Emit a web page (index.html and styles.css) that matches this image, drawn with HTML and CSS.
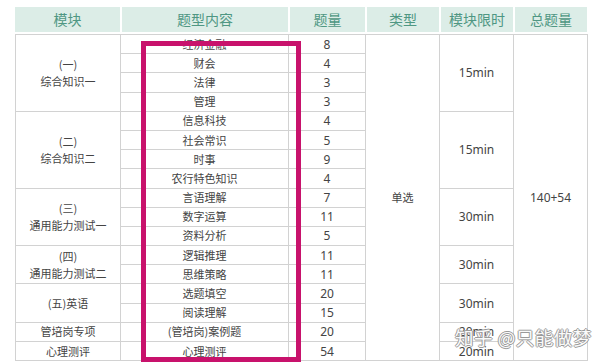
FILE: index.html
```html
<!DOCTYPE html>
<html lang="zh">
<head>
<meta charset="utf-8">
<link rel="stylesheet" href="styles.css">
</head>
<body>
<div class="sheet">
  <div class="head">
    <div class="hc">模块</div>
    <div class="hc">题型内容</div>
    <div class="hc">题量</div>
    <div class="hc">类型</div>
    <div class="hc">模块限时</div>
    <div class="hc">总题量</div>
  </div>
  <table class="grid">
    <colgroup>
      <col class="c1"><col class="c2"><col class="c3"><col class="c4"><col class="c5"><col class="c6">
    </colgroup>
    <tbody>
      <tr><td rowspan="4" class="mod">(一)<br>综合知识一</td><td>经济金融</td><td class="num">8</td><td rowspan="17">单选</td><td rowspan="4" class="num">15min</td><td rowspan="17" class="num">140+54</td></tr>
      <tr><td>财会</td><td class="num">4</td></tr>
      <tr><td>法律</td><td class="num">3</td></tr>
      <tr><td>管理</td><td class="num">3</td></tr>
      <tr><td rowspan="4" class="mod">(二)<br>综合知识二</td><td>信息科技</td><td class="num">4</td><td rowspan="4" class="num">15min</td></tr>
      <tr><td>社会常识</td><td class="num">5</td></tr>
      <tr><td>时事</td><td class="num">9</td></tr>
      <tr><td>农行特色知识</td><td class="num">4</td></tr>
      <tr><td rowspan="3" class="mod">(三)<br>通用能力测试一</td><td>言语理解</td><td class="num">7</td><td rowspan="3" class="num">30min</td></tr>
      <tr><td>数字运算</td><td class="num">11</td></tr>
      <tr><td>资料分析</td><td class="num">5</td></tr>
      <tr><td rowspan="2" class="mod">(四)<br>通用能力测试二</td><td>逻辑推理</td><td class="num">11</td><td rowspan="2" class="num">30min</td></tr>
      <tr><td>思维策略</td><td class="num">11</td></tr>
      <tr><td rowspan="2">(五)英语</td><td>选题填空</td><td class="num">20</td><td rowspan="2" class="num">30min</td></tr>
      <tr><td>阅读理解</td><td class="num">15</td></tr>
      <tr><td>管培岗专项</td><td>(管培岗)案例题</td><td class="num">20</td><td class="num">20min</td></tr>
      <tr><td>心理测评</td><td>心理测评</td><td class="num">54</td><td class="num">20min</td></tr>
    </tbody>
  </table>
  <div class="mark"></div>
  <div class="wm">知乎 @只能做梦</div>
</div>
</body>
</html>
```

FILE: styles.css
```css
* { box-sizing: border-box; }
html, body { margin: 0; padding: 0; background: #fff; }
body {
  width: 600px; height: 364px; overflow: hidden;
  font-family: "Noto Sans CJK SC", "Noto Sans", sans-serif;
}
.sheet {
  position: relative;
  width: 600px; height: 364px;
  padding: 7px 0 0 15px;
}
.head {
  display: grid;
  grid-template-columns: 105px 168px 77px 74px 74px 74px;
  width: 572px;
  height: 25px;
}
.hc {
  background: #dcede7;
  color: #4f9783;
  font-size: 14px;
  line-height: 25px;
  text-align: center;
  border-left: 2px solid #fff;
}
.hc:first-child { border-left: 0; }
.grid {
  margin-top: 2px;
  width: 572px;
  table-layout: fixed;
  border-collapse: collapse;
  border: 1px solid #c8c8c8;
}
.c1 { width: 105px; } .c2 { width: 168px; } .c3 { width: 77px; }
.c4 { width: 74px; } .c5 { width: 74px; } .c6 { width: 74px; }
.grid tr { height: 19.2px; }
.grid td {
  border: 1px solid #d2d2d2;
  padding: 0;
  text-align: center;
  vertical-align: middle;
  font-size: 11px;
  line-height: 17px;
  color: #444;
}
.grid td.num {
  font-family: "Noto Sans", "Noto Sans CJK SC", sans-serif;
  font-size: 12px;
}
.mark {
  position: absolute;
  left: 141px; top: 41px;
  width: 160px; height: 321px;
  border: 5px solid #c8126c;
}
.wm {
  position: absolute;
  left: 455px; top: 324px;
  font-size: 18.5px;
  color: #fafafa;
  letter-spacing: 0.5px;
  text-shadow: 1px 0 0 #9a9a9a, -1px 0 0 #9a9a9a, 0 1px 0 #9a9a9a, 0 -1px 0 #9a9a9a;
  white-space: nowrap;
}
```
